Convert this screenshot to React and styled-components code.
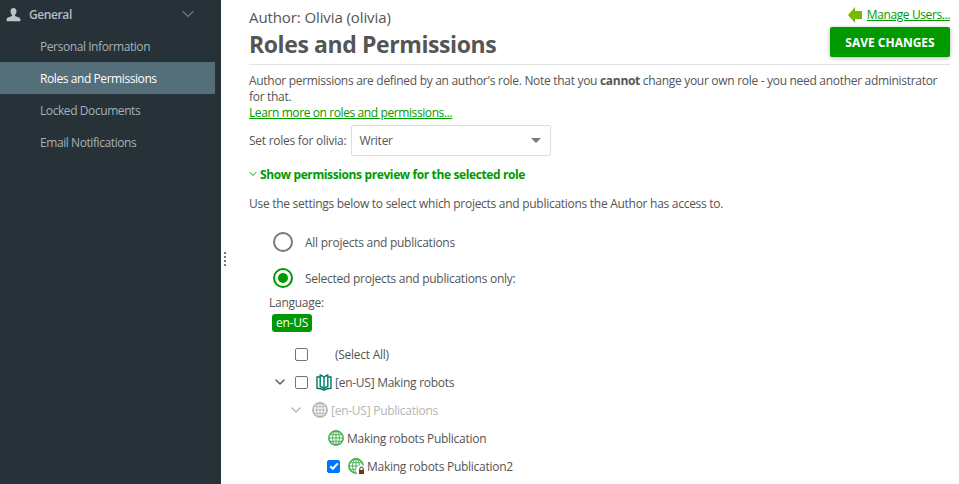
import React from "react";
import styled, { createGlobalStyle } from "styled-components";
import { ChevronDown } from "lucide-react";

const GlobalStyle = createGlobalStyle`
  html, body {
    margin: 0;
    padding: 0;
    height: 100%;
    overflow: hidden;
    background: #ffffff;
  }
  * { box-sizing: border-box; }
`;

const Page = styled.div`
  display: flex;
  width: 959px;
  height: 484px;
  overflow: hidden;
  font-family: "Open Sans", "Noto Sans", sans-serif;
  font-size: 12px;
  letter-spacing: -0.26px;
  color: #555555;
`;

const Sidebar = styled.nav`
  width: 221px;
  flex: none;
  background: #263238;
  padding-right: 6px;
`;

const SideHeader = styled.div`
  display: flex;
  align-items: center;
  height: 30px;
  padding: 0 17px 2px 6px;
  color: #b0bec5;
  font-weight: 600;
  font-size: 12px;
  letter-spacing: -0.4px;
`;

const SideTitle = styled.span`
  flex: 1;
  margin-left: 8px;
`;

const SideItem = styled.div`
  height: 32px;
  line-height: 30px;
  padding: 2px 0 0 40px;
  font-size: 12px;
  letter-spacing: -0.42px;
  color: ${p => (p.$active ? "#ffffff" : "#a5b1b7")};
  background: ${p => (p.$active ? "#546e7a" : "transparent")};
`;

const Gutter = styled.div`
  width: 28px;
  flex: none;
  display: flex;
  justify-content: center;
  padding: 252px 21px 0 0;
`;

const Dots = styled.div`
  width: 2px;
  height: 15px;
  background: repeating-linear-gradient(#777777 0 2px, transparent 2px 4px);
`;

const Main = styled.main`
  width: 701px;
  flex: none;
`;

const Header = styled.header`
  display: flex;
  justify-content: space-between;
  height: 65px;
  border-bottom: 1px solid #e3e3e3;
`;

const Author = styled.div`
  font-size: 15px;
  line-height: 20px;
  margin-top: 7px;
  letter-spacing: -0.1px;
`;

const Title = styled.h1`
  margin: 2px 0 0;
  font-size: 23px;
  line-height: 30px;
  font-weight: 700;
  color: #555555;
  letter-spacing: -0.4px;
`;

const HeaderActions = styled.div`
  display: flex;
  flex-direction: column;
  align-items: flex-end;
`;

const ManageRow = styled.div`
  display: flex;
  align-items: center;
  gap: 5px;
  height: 27px;
  padding-top: 2px;
`;

const GreenLink = styled.a`
  color: #009900;
  text-decoration: underline;
  font-size: 12px;
  letter-spacing: -0.4px;
`;

const SaveButton = styled.button`
  width: 120px;
  height: 30px;
  border: none;
  border-radius: 2px;
  background: #009900;
  color: #ffffff;
  font-family: inherit;
  font-size: 12px;
  font-weight: 700;
  box-shadow: 0 1px 4px rgba(0, 0, 0, 0.3);
`;

const Intro = styled.p`
  margin: 8px 0 0;
  line-height: 16px;
  letter-spacing: -0.3px;
`;

const RoleRow = styled.div`
  display: flex;
  align-items: center;
  gap: 5px;
  margin-top: 4px;
  height: 31px;
`;

const Select = styled.div`
  width: 200px;
  height: 31px;
  display: flex;
  align-items: center;
  justify-content: space-between;
  padding: 0 9px 0 7px;
  border: 1px solid #dddddd;
  border-radius: 2px;
`;

const Caret = styled.span`
  width: 0;
  height: 0;
  border-left: 5px solid transparent;
  border-right: 5px solid transparent;
  border-top: 5px solid #777777;
`;

const PreviewToggle = styled.div`
  display: flex;
  align-items: center;
  gap: 1px;
  margin: 9px 0 0 -2px;
  height: 18px;
  color: #009900;
  font-weight: 700;
  letter-spacing: -0.38px;
`;

const Hint = styled.p`
  margin: 13px 0 0;
  line-height: 16px;
  letter-spacing: -0.28px;
`;

const RadioRow = styled.div`
  display: flex;
  align-items: center;
  height: 20px;
  margin: ${p => p.$top}px 0 0 24px;
  gap: 12px;
`;

const Radio = styled.span`
  width: 20px;
  height: 20px;
  border-radius: 50%;
  flex: none;
  border: 2px solid ${p => (p.$checked ? "#009900" : "#777777")};
  display: flex;
  align-items: center;
  justify-content: center;
  &::after {
    content: "";
    display: ${p => (p.$checked ? "block" : "none")};
    width: 10px;
    height: 10px;
    border-radius: 50%;
    background: #009900;
  }
`;

const LanguageLabel = styled.div`
  margin: 7px 0 0 20px;
  line-height: 16px;
`;

const Badge = styled.span`
  display: inline-block;
  margin: 3px 0 0 23px;
  width: 40px;
  height: 18px;
  line-height: 18px;
  text-align: center;
  border-radius: 3px;
  background: #009900;
  color: #ffffff;
`;

const Tree = styled.div`
  margin-top: 8px;
`;

const TreeRow = styled.div`
  display: flex;
  align-items: center;
  height: 28px;
  padding-left: ${p => p.$indent}px;
  color: ${p => (p.$muted ? "#b5b5b5" : "#555555")};
`;

const Toggle = styled.span`
  width: 16px;
  flex: none;
  display: flex;
  justify-content: center;
  margin-right: ${p => p.$gap}px;
`;

const Check = styled.span`
  width: 13px;
  height: 13px;
  flex: none;
  margin-right: ${p => p.$gap}px;
  border-radius: 2px;
  border: 1px solid ${p => (p.$checked ? "#0075ff" : "#767676")};
  background: ${p => (p.$checked ? "#0075ff" : "#ffffff")};
  display: flex;
  align-items: center;
  justify-content: center;
`;

const IconSlot = styled.span`
  position: relative;
  display: flex;
  flex: none;
  margin-right: ${p => p.$gap}px;
`;

const LockBadge = styled.svg`
  position: absolute;
  right: -3px;
  bottom: -2px;
`;

const Globe = ({ color }) => (
  <svg width="16" height="16" viewBox="0 0 16 16" fill="none" stroke={color} strokeWidth="1">
    <circle cx="8" cy="8" r="7.1" strokeWidth="1.7" />
    <ellipse cx="8" cy="8" rx="3.4" ry="7" />
    <path d="M8 1v14M1 8h14M2 4.7h12M2 11.3h12" />
  </svg>
);

const Book = () => (
  <svg width="16" height="17" viewBox="0 0 16 17" fill="none" stroke="#00796b" strokeWidth="1.4">
    <path d="M8 3.5C7.2 2.2 5.8 1.2 4.2 1v11.5c1.6.3 3 1.2 3.800 2.500.8-1.300 2.200-2.200 3.800-2.500V1C10.200 1.200 8.800 2.200 8 3.500z" />
    <path d="M8 3.500V15M4.200 3H1v11.200c2.600 0 5 .5 7 2 2-1.500 4.400-2 7-2V3h-3.200" />
  </svg>
);

const Person = () => (
  <svg width="15" height="15" viewBox="0 0 15 15" fill="#b9c4c9">
    <path d="M7.5 1C5.6 1 4.5 2.3 4.5 4.2c0 1.6.7 3 1.5 3.7v1.2C4.4 10 .8 10.4.6 12.4v1.8h13.8v-1.8c-.2-2-3.8-2.4-5.4-3.3V7.900c.8-.7 1.500-2.100 1.500-3.700C10.500 2.300 9.400 1 7.500 1z" />
  </svg>
);

const Tick = () => (
  <svg width="10" height="10" viewBox="0 0 10 10" fill="none" stroke="#ffffff" strokeWidth="2">
    <path d="M1.2 5.2l2.600 2.600 5-5.400" />
  </svg>
);

const App = () => (
  <Page>
    <GlobalStyle />
    <Sidebar>
      <SideHeader>
        <Person />
        <SideTitle>General</SideTitle>
        <ChevronDown size={20} stroke="#5f6f77" />
      </SideHeader>
      <SideItem>Personal Information</SideItem>
      <SideItem $active>Roles and Permissions</SideItem>
      <SideItem>Locked Documents</SideItem>
      <SideItem>Email Notifications</SideItem>
    </Sidebar>
    <Gutter>
      <Dots />
    </Gutter>
    <Main>
      <Header>
        <div>
          <Author>Author: Olivia (olivia)</Author>
          <Title>Roles and Permissions</Title>
        </div>
        <HeaderActions>
          <ManageRow>
            <svg width="14" height="16" viewBox="0 0 14 16">
              <path d="M0 8l7-8v4h7v8H7v4z" fill="#76b900" />
            </svg>
            <GreenLink>Manage Users...</GreenLink>
          </ManageRow>
          <SaveButton>SAVE CHANGES</SaveButton>
        </HeaderActions>
      </Header>
      <Intro>
        Author permissions are defined by an author's role. Note that you <b>cannot</b> change your own role - you need another administrator for that.
        <br />
        <GreenLink>Learn more on roles and permissions...</GreenLink>
      </Intro>
      <RoleRow>
        Set roles for olivia:
        <Select>
          Writer
          <Caret />
        </Select>
      </RoleRow>
      <PreviewToggle>
        <ChevronDown size={12} strokeWidth={2} />
        Show permissions preview for the selected role
      </PreviewToggle>
      <Hint>Use the settings below to select which projects and publications the Author has access to.</Hint>
      <RadioRow $top={20}>
        <Radio />
        All projects and publications
      </RadioRow>
      <RadioRow $top={16}>
        <Radio $checked />
        Selected projects and publications only:
      </RadioRow>
      <LanguageLabel>Language:</LanguageLabel>
      <Badge>en-US</Badge>
      <Tree>
        <TreeRow $indent={46}>
          <Check $gap={27} />
          (Select All)
        </TreeRow>
        <TreeRow $indent={23}>
          <Toggle $gap={7}>
            <ChevronDown size={16} />
          </Toggle>
          <Check $gap={8} />
          <IconSlot $gap={3}>
            <Book />
          </IconSlot>
          [en-US] Making robots
        </TreeRow>
        <TreeRow $indent={39} $muted>
          <Toggle $gap={8}>
            <ChevronDown size={16} stroke="#b5b5b5" />
          </Toggle>
          <IconSlot $gap={3}>
            <Globe color="#b5b5b5" />
          </IconSlot>
          [en-US] Publications
        </TreeRow>
        <TreeRow $indent={79}>
          <IconSlot $gap={3}>
            <Globe color="#4caf50" />
          </IconSlot>
          Making robots Publication
        </TreeRow>
        <TreeRow $indent={78}>
          <Check $checked $gap={8}>
            <Tick />
          </Check>
          <IconSlot $gap={3}>
            <Globe color="#4caf50" />
            <LockBadge width="11" height="11" viewBox="0 0 11 11">
              <circle cx="5.5" cy="5.5" r="5.5" fill="#ffffff" />
              <path d="M3.8 5V3.8a1.7 1.7 0 013.4 0V5" fill="none" stroke="#333333" />
              <rect x="3" y="5" width="5" height="4" fill="#6b3f0c" />
            </LockBadge>
          </IconSlot>
          Making robots Publication2
        </TreeRow>
      </Tree>
    </Main>
  </Page>
);

export default App;
